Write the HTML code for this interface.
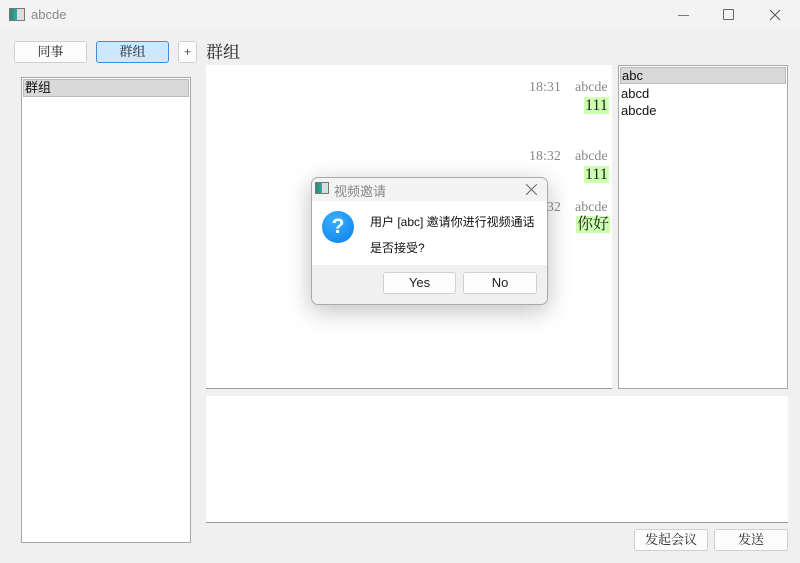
<!DOCTYPE html>
<html><head><meta charset="utf-8"><style>
*{box-sizing:border-box;margin:0;padding:0}
body{width:800px;height:563px;overflow:hidden;background:#f0f0f0;font-family:"Liberation Serif","Noto Serif CJK SC",serif;position:relative}
.a{position:absolute}
.btn{position:absolute;background:#fdfdfd;border:1px solid #d0d0d0;border-radius:3px;font-size:13px;text-align:center;color:#222}
.sans{font-family:"Liberation Sans","Noto Sans CJK SC",sans-serif}
.list{position:absolute;background:#fff;border:1px solid #a8a8a8}
.msgt{position:absolute;font-size:14px;color:#888}
.bub{position:absolute;background:#ccffb0;font-size:16px;color:#222;line-height:17px;padding:0 1px}
</style></head><body>
<div class="a" style="left:0;top:0;width:800px;height:30px;background:#f3f3f3"></div>
<div class="a" style="left:9px;top:8px;width:16px;height:13px;border:1px solid #777;background:linear-gradient(90deg,#2a8a6a 0,#3aa 50%,#ddd 50%)"></div>
<div class="a sans" style="left:31px;top:7px;font-size:13px;color:#888">abcde</div>
<div class="a" style="left:678px;top:15px;width:11px;height:1px;background:#777"></div>
<div class="a" style="left:723px;top:9px;width:11px;height:11px;border:1px solid #666;border-radius:1px"></div>
<svg class="a" style="left:769px;top:9px" width="12" height="12"><path d="M1 1L11 11M11 1L1 11" stroke="#555" stroke-width="1"/></svg>

<div class="btn" style="left:14px;top:41px;width:73px;height:22px;line-height:20px">同事</div>
<div class="btn" style="left:96px;top:41px;width:73px;height:22px;line-height:20px;background:#cce8ff;border-color:#3c8ee0">群组</div>
<div class="btn" style="left:178px;top:41px;width:19px;height:22px;line-height:20px">+</div>
<div class="a" style="left:206px;top:38px;font-size:17px;color:#222">群组</div>

<div class="list" style="left:21px;top:77px;width:170px;height:466px"><div style="margin:1px;height:18px;background:#d9d9d9;border:1px solid #bbb;font-size:13px;line-height:16px;padding-left:1px;color:#111" class="sans">群组</div></div>

<div class="a" style="left:206px;top:65px;width:406px;height:324px;background:#fff;border-bottom:1px solid #999"></div>
<div class="msgt" style="left:529px;top:80px">18:31</div><div class="msgt" style="left:575px;top:80px">abcde</div>
<div class="bub" style="left:584px;top:97px">111</div>
<div class="msgt" style="left:529px;top:149px">18:32</div><div class="msgt" style="left:575px;top:149px">abcde</div>
<div class="bub" style="left:584px;top:166px">111</div>
<div class="msgt" style="left:529px;top:200px">18:32</div><div class="msgt" style="left:575px;top:200px">abcde</div>
<div class="bub" style="left:576px;top:216px">你好</div>

<div class="list sans" style="left:618px;top:65px;width:170px;height:324px;font-size:13px;color:#111">
<div style="margin:1px;height:17px;background:#d9d9d9;border:1px solid #bbb;line-height:15px;padding-left:1px">abc</div>
<div style="padding-left:2px;line-height:17px">abcd</div>
<div style="padding-left:2px;line-height:17px">abcde</div></div>

<div class="a" style="left:206px;top:396px;width:582px;height:127px;background:#fff;border-bottom:1px solid #999"></div>
<div class="btn" style="left:634px;top:529px;width:74px;height:22px;line-height:20px">发起会议</div>
<div class="btn" style="left:714px;top:529px;width:74px;height:22px;line-height:20px">发送</div>

<div class="a" style="left:311px;top:177px;width:237px;height:128px;background:#f0f0f0;border:1px solid #aaa;border-radius:7px;box-shadow:0 6px 24px rgba(0,0,0,.25);overflow:hidden">
<div class="a" style="left:0;top:0;width:237px;height:23px;background:#f3f3f3"></div>
<div class="a" style="left:3px;top:4px;width:14px;height:12px;border:1px solid #777;background:linear-gradient(90deg,#2a8a6a 0,#3aa 50%,#ddd 50%)"></div>
<div class="a sans" style="left:22px;top:3px;font-size:13px;color:#888">视频邀请</div>
<svg class="a" style="left:214px;top:6px" width="11" height="11"><path d="M0 0L11 11M11 0L0 11" stroke="#666" stroke-width="1"/></svg>
<div class="a" style="left:0;top:23px;width:237px;height:64px;background:#fff"></div>
<div class="a sans" style="left:10px;top:33px;width:32px;height:32px;border-radius:50%;background:radial-gradient(circle at 40% 30%,#3ab0ff,#0a7fe8);color:#fff;font-size:21px;text-align:center;line-height:32px;font-weight:bold">?</div>
<div class="a sans" style="left:58px;top:35px;font-size:12px;color:#111">用户 [abc] 邀请你进行视频通话</div>
<div class="a sans" style="left:58px;top:61px;font-size:12px;color:#111">是否接受?</div>
<div class="btn sans" style="left:71px;top:94px;width:73px;height:22px;line-height:20px">Yes</div>
<div class="btn sans" style="left:151px;top:94px;width:74px;height:22px;line-height:20px">No</div>
</div>
</body></html>
